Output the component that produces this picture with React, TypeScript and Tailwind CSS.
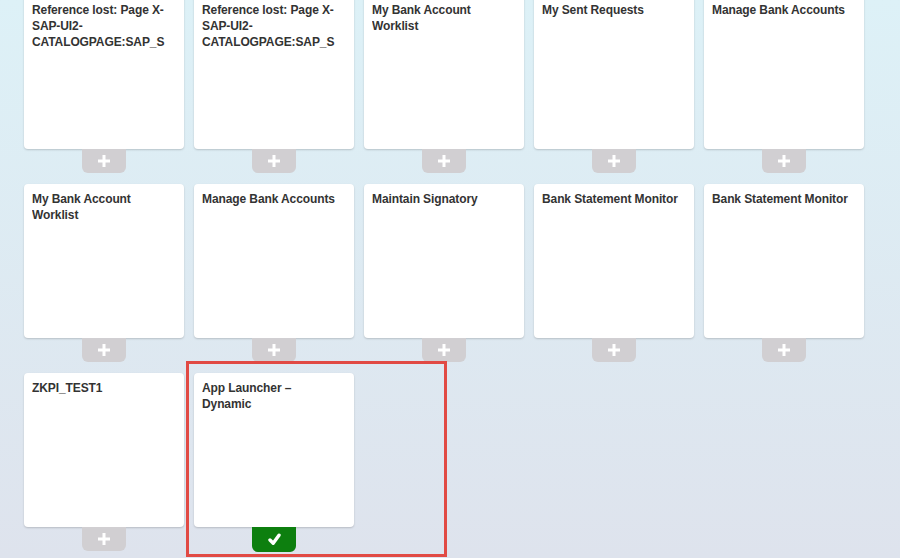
import React from "react";

type Tile = { lines: string[]; added?: boolean };

const tiles: Tile[] = [
  { lines: ["Reference lost: Page X-", "SAP-UI2-", "CATALOGPAGE:SAP_S"] },
  { lines: ["Reference lost: Page X-", "SAP-UI2-", "CATALOGPAGE:SAP_S"] },
  { lines: ["My Bank Account", "Worklist"] },
  { lines: ["My Sent Requests"] },
  { lines: ["Manage Bank Accounts"] },
  { lines: ["My Bank Account", "Worklist"] },
  { lines: ["Manage Bank Accounts"] },
  { lines: ["Maintain Signatory"] },
  { lines: ["Bank Statement Monitor"] },
  { lines: ["Bank Statement Monitor"] },
  { lines: ["ZKPI_TEST1"] },
  { lines: ["App Launcher \u2013", "Dynamic"], added: true },
];

function PlusIcon() {
  return (
    <svg width="14" height="14" viewBox="0 0 14 14">
      <path d="M7 1v12M1 7h12" stroke="#fff" strokeWidth="3" />
    </svg>
  );
}

function CheckIcon() {
  return (
    <svg width="13" height="13" viewBox="0 0 13 13">
      <path
        d="M2 7 L5.2 10.2 L11 2.2"
        stroke="#fff"
        strokeWidth="3.4"
        fill="none"
        strokeLinecap="round"
        strokeLinejoin="round"
      />
    </svg>
  );
}

export default function App() {
  return (
    <div
      className="relative w-[900px] h-[558px] overflow-hidden bg-linear-to-b from-[#ddf1f7] to-[#dee3ed]"
      style={{ fontFamily: '"Liberation Sans", Arial, sans-serif' }}
    >
      <div className="mt-[-5px] pl-[24px] grid grid-cols-[repeat(5,160px)] gap-x-[10px] gap-y-[11px]">
        {tiles.map((t, i) => (
          <div key={i} className="flex flex-col items-center">
            <div className="w-[160px] h-[154px] bg-white rounded-[4px] shadow-[0_1px_2px_rgba(0,0,0,0.18)] px-[8px] pt-[7px] text-left self-stretch">
              {t.lines.map((l, j) => (
                <div key={j} className="text-[12px] leading-[16px] font-bold text-[#333333] whitespace-nowrap overflow-hidden tracking-[-0.1px]">
                  {l}
                </div>
              ))}
            </div>
            {t.added ? (
              <div className="w-[44px] h-[25px] bg-[#0d7f0f] rounded-b-[6px] flex items-center justify-center">
                <CheckIcon />
              </div>
            ) : (
              <div className="w-[44px] h-[24px] bg-[#d1cfd2] rounded-b-[6px] flex items-center justify-center">
                <PlusIcon />
              </div>
            )}
          </div>
        ))}
      </div>
      <div className="absolute left-[186px] top-[361px] w-[261px] h-[196px] border-[3px] border-[#e14a44] pointer-events-none" />
    </div>
  );
}
